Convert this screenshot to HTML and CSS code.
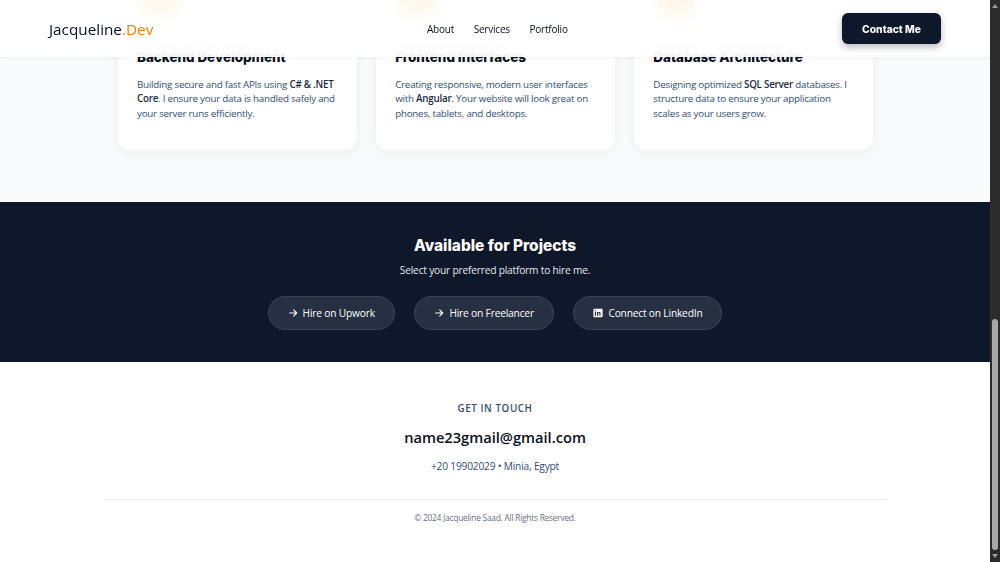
FILE: index.html
```html
<!DOCTYPE html>
<html lang="en">
<head>
<meta charset="utf-8">
<title>Jacqueline.Dev</title>
<link rel="stylesheet" href="styles.css">
</head>
<body>
<div class="viewport">
  <div class="page">
    <header class="site-header">
      <a class="logo">Jacqueline<span class="accent">.Dev</span></a>
      <nav class="nav">
        <a>About</a>
        <a>Services</a>
        <a>Portfolio</a>
      </nav>
      <a class="contact-btn">Contact Me</a>
    </header>
    <main class="scrolled">
      <section class="services">
        <div class="cards">
          <article class="card">
            <div class="card-icon"></div>
            <h3>Backend Development</h3>
            <p>Building secure and fast APIs using <b>C# &amp; .NET Core</b>. I ensure your data is handled safely and your server runs efficiently.</p>
          </article>
          <article class="card">
            <div class="card-icon"></div>
            <h3>Frontend Interfaces</h3>
            <p>Creating responsive, modern user interfaces with <b>Angular</b>. Your website will look great on phones, tablets, and desktops.</p>
          </article>
          <article class="card">
            <div class="card-icon"></div>
            <h3>Database Architecture</h3>
            <p>Designing optimized <b>SQL Server</b> databases. I structure data to ensure your application scales as your users grow.</p>
          </article>
        </div>
      </section>
      <section class="hire">
        <h2>Available for Projects</h2>
        <p class="hire-sub">Select your preferred platform to hire me.</p>
        <div class="hire-links">
          <a class="pill">
            <svg class="pill-icon" viewBox="0 0 12 12"><path d="M1.500 6h9M6.500 2l4 4-4 4" fill="none" stroke="currentColor" stroke-width="1.300"/></svg>
            Hire on Upwork
          </a>
          <a class="pill">
            <svg class="pill-icon" viewBox="0 0 12 12"><path d="M1.500 6h9M6.500 2l4 4-4 4" fill="none" stroke="currentColor" stroke-width="1.300"/></svg>
            Hire on Freelancer
          </a>
          <a class="pill">
            <svg class="pill-icon" viewBox="0 0 12 12"><path fill="currentColor" fill-rule="evenodd" d="M1.200 1h9.600c.4 0 .7.3.7.7v8.600c0 .4-.3.7-.7.7H1.200c-.4 0-.7-.3-.7-.7V1.700c0-.4.3-.7.7-.7zM2.300 4.800v4.400h1.400V4.800zM3 2.600a.8.8 0 1 0 0 1.600.8.8 0 0 0 0-1.600zM4.800 4.800v4.400h1.400V7c0-1.300 1.500-1.300 1.500 0v2.200h1.400V6.500c0-2.100-2.300-2.100-2.900-1v-.7z"/></svg>
            Connect on LinkedIn
          </a>
        </div>
      </section>
      <footer class="contact">
        <div class="eyebrow">GET IN TOUCH</div>
        <div class="email">name23gmail@gmail.com</div>
        <div class="phone">+20 19902029 • Minia, Egypt</div>
        <div class="copyright">© 2024 Jacqueline Saad. All Rights Reserved.</div>
      </footer>
    </main>
  </div>
  <div class="scrollbar">
    <span class="arrow-up"></span>
    <span class="track"><span class="thumb"></span></span>
    <span class="arrow-down"></span>
  </div>
</div>
</body>
</html>
```
FILE: styles.css
```css
* { box-sizing: border-box; }
html, body { margin: 0; height: 100%; overflow: hidden; }
body { font-family: "Open Sans", "Noto Sans", sans-serif; color: #0f172a; background: #fff; }
.viewport { display: flex; width: 1000px; height: 562px; overflow: hidden; }
.page { position: relative; width: 990px; height: 562px; overflow: hidden; }

.site-header {
  position: absolute; top: 0; left: 0; right: 0; height: 57px; z-index: 5;
  display: flex; align-items: center; padding: 0 49px;
  background: rgba(255, 255, 255, 0.9);
  backdrop-filter: blur(8px);
  box-shadow: 0 1px 4px rgba(15, 23, 42, 0.05);
}
.logo { font-size: 15.3px; font-weight: 400; color: #0a1020; width: 378px; }
.accent { color: #f08000; }
.nav { display: flex; gap: 19.500px; font-size: 10px; font-weight: 500; letter-spacing: -0.2px; color: #0a1020; }
.contact-btn {
  margin-left: auto; width: 99px; height: 31px; border-radius: 6px;
  display: flex; align-items: center; justify-content: center;
  background: #0f172a; color: #fff; font-family: Inter, sans-serif; font-size: 10.3px; font-weight: 800;
  box-shadow: 0 3px 7px rgba(15, 23, 42, 0.3);
}

.scrolled { display: flex; flex-direction: column; margin-top: -28px; }
.services { height: 230px; background: #f8fafc; }
.cards { display: flex; gap: 19.500px; margin: 0 117px 0 118px; }
.card {
  flex: 1; height: 178px; padding: 4px 19px 0; border-radius: 12px; background: #fff;
  box-shadow: 0 3px 12px rgba(15, 23, 42, 0.05);
}
.card-icon { width: 36px; height: 40px; margin: 0 0 31px 5px; border-radius: 10px; background: #ffb04d; }
.card h3 { margin: 0 0 10.500px; font-family: Inter, sans-serif; font-size: 13.400px; font-weight: 800; line-height: 20px; color: #0a1020; }
.card p { margin: 0; font-size: 9.800px; letter-spacing: -0.24px; line-height: 14.700px; color: #334e73; }
.card b { font-weight: 600; color: #1c2b47; }

.hire { height: 160px; padding-top: 34px; background: #0f172a; color: #fff; text-align: center; }
.hire h2 { margin: 0; font-family: Inter, sans-serif; font-size: 15.400px; font-weight: 800; line-height: 20px; }
.hire-sub { margin: 6px 0 0; font-size: 10.200px; letter-spacing: -0.2px; line-height: 16px; color: #e2e8f0; }
.hire-links { display: flex; justify-content: center; gap: 19.500px; margin-top: 18px; }
.pill {
  display: flex; align-items: center; gap: 5px; height: 34px; padding: 0 19px; border-radius: 17px;
  background: #272f42; border: 1px solid #3a4254; color: #fff; font-size: 10.200px; font-weight: 500; letter-spacing: -0.18px;
}
.pill-icon { width: 10px; height: 10px; }

.contact { height: 200px; padding-top: 40px; text-align: center; background: #fff; }
.eyebrow { font-size: 9.800px; font-weight: 600; line-height: 14px; letter-spacing: 0.6px; color: #334e73; }
.email { margin-top: 11px; font-size: 14.650px; font-weight: 600; line-height: 20px; color: #0a1020; }
.phone { margin-top: 12px; font-size: 10.200px; letter-spacing: -0.2px; line-height: 15px; color: #334e73; }
.copyright { margin: 25px 104px 0; padding-top: 12px; border-top: 1px solid #e9ecef; font-size: 8.400px; letter-spacing: -0.24px; line-height: 12px; color: #6b7280; }

.scrollbar { display: flex; flex-direction: column; align-items: center; width: 10px; height: 562px; background: #2c2c2c; }
.arrow-up, .arrow-down { flex: none; width: 0; height: 0; border-left: 3px solid transparent; border-right: 3px solid transparent; }
.arrow-up { margin-top: 4px; border-bottom: 4px solid #9a9a9a; }
.arrow-down { margin-bottom: 4px; border-top: 4px solid #9a9a9a; }
.track { flex: 1; display: flex; flex-direction: column; justify-content: flex-end; width: 100%; padding: 0 2px 4px; }
.thumb { display: block; width: 100%; height: 231px; border-radius: 3px; background: #a8a8a8; }
```
